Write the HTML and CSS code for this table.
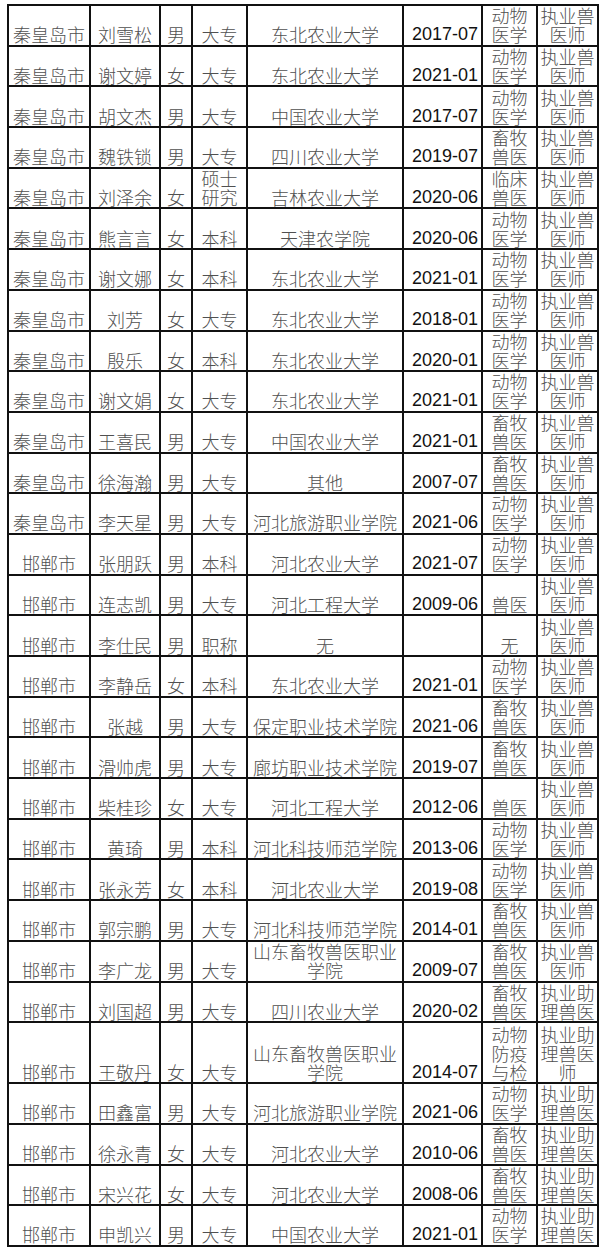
FILE: index.html
```html
<!DOCTYPE html>
<html lang="zh-CN">
<head>
<meta charset="utf-8">
<title>名单</title>
<link rel="stylesheet" href="styles.css">
</head>
<body>
<div class="t">
<div class="c">秦皇岛市</div><div class="c">刘雪松</div><div class="c">男</div><div class="c">大专</div><div class="c">东北农业大学</div><div class="c d">2017-07</div><div class="c">动物医学</div><div class="c">执业兽医师</div>
<div class="c">秦皇岛市</div><div class="c">谢文婷</div><div class="c">女</div><div class="c">大专</div><div class="c">东北农业大学</div><div class="c d">2021-01</div><div class="c">动物医学</div><div class="c">执业兽医师</div>
<div class="c">秦皇岛市</div><div class="c">胡文杰</div><div class="c">男</div><div class="c">大专</div><div class="c">中国农业大学</div><div class="c d">2017-07</div><div class="c">动物医学</div><div class="c">执业兽医师</div>
<div class="c">秦皇岛市</div><div class="c">魏铁锁</div><div class="c">男</div><div class="c">大专</div><div class="c">四川农业大学</div><div class="c d">2019-07</div><div class="c">畜牧兽医</div><div class="c">执业兽医师</div>
<div class="c">秦皇岛市</div><div class="c">刘泽余</div><div class="c">女</div><div class="c">硕士研究</div><div class="c">吉林农业大学</div><div class="c d">2020-06</div><div class="c">临床兽医</div><div class="c">执业兽医师</div>
<div class="c">秦皇岛市</div><div class="c">熊言言</div><div class="c">女</div><div class="c">本科</div><div class="c">天津农学院</div><div class="c d">2020-06</div><div class="c">动物医学</div><div class="c">执业兽医师</div>
<div class="c">秦皇岛市</div><div class="c">谢文娜</div><div class="c">女</div><div class="c">本科</div><div class="c">东北农业大学</div><div class="c d">2021-01</div><div class="c">动物医学</div><div class="c">执业兽医师</div>
<div class="c">秦皇岛市</div><div class="c">刘芳</div><div class="c">女</div><div class="c">大专</div><div class="c">东北农业大学</div><div class="c d">2018-01</div><div class="c">动物医学</div><div class="c">执业兽医师</div>
<div class="c">秦皇岛市</div><div class="c">殷乐</div><div class="c">女</div><div class="c">本科</div><div class="c">东北农业大学</div><div class="c d">2020-01</div><div class="c">动物医学</div><div class="c">执业兽医师</div>
<div class="c">秦皇岛市</div><div class="c">谢文娟</div><div class="c">女</div><div class="c">大专</div><div class="c">东北农业大学</div><div class="c d">2021-01</div><div class="c">动物医学</div><div class="c">执业兽医师</div>
<div class="c">秦皇岛市</div><div class="c">王喜民</div><div class="c">男</div><div class="c">大专</div><div class="c">中国农业大学</div><div class="c d">2021-01</div><div class="c">畜牧兽医</div><div class="c">执业兽医师</div>
<div class="c">秦皇岛市</div><div class="c">徐海瀚</div><div class="c">男</div><div class="c">大专</div><div class="c">其他</div><div class="c d">2007-07</div><div class="c">畜牧兽医</div><div class="c">执业兽医师</div>
<div class="c">秦皇岛市</div><div class="c">李天星</div><div class="c">男</div><div class="c">大专</div><div class="c">河北旅游职业学院</div><div class="c d">2021-06</div><div class="c">动物医学</div><div class="c">执业兽医师</div>
<div class="c">邯郸市</div><div class="c">张朋跃</div><div class="c">男</div><div class="c">本科</div><div class="c">河北农业大学</div><div class="c d">2021-07</div><div class="c">动物医学</div><div class="c">执业兽医师</div>
<div class="c">邯郸市</div><div class="c">连志凯</div><div class="c">男</div><div class="c">大专</div><div class="c">河北工程大学</div><div class="c d">2009-06</div><div class="c">兽医</div><div class="c">执业兽医师</div>
<div class="c">邯郸市</div><div class="c">李仕民</div><div class="c">男</div><div class="c">职称</div><div class="c">无</div><div class="c d"></div><div class="c">无</div><div class="c">执业兽医师</div>
<div class="c">邯郸市</div><div class="c">李静岳</div><div class="c">女</div><div class="c">本科</div><div class="c">东北农业大学</div><div class="c d">2021-01</div><div class="c">动物医学</div><div class="c">执业兽医师</div>
<div class="c">邯郸市</div><div class="c">张越</div><div class="c">男</div><div class="c">大专</div><div class="c">保定职业技术学院</div><div class="c d">2021-06</div><div class="c">畜牧兽医</div><div class="c">执业兽医师</div>
<div class="c">邯郸市</div><div class="c">滑帅虎</div><div class="c">男</div><div class="c">大专</div><div class="c">廊坊职业技术学院</div><div class="c d">2019-07</div><div class="c">畜牧兽医</div><div class="c">执业兽医师</div>
<div class="c">邯郸市</div><div class="c">柴桂珍</div><div class="c">女</div><div class="c">大专</div><div class="c">河北工程大学</div><div class="c d">2012-06</div><div class="c">兽医</div><div class="c">执业兽医师</div>
<div class="c">邯郸市</div><div class="c">黄琦</div><div class="c">男</div><div class="c">本科</div><div class="c">河北科技师范学院</div><div class="c d">2013-06</div><div class="c">动物医学</div><div class="c">执业兽医师</div>
<div class="c">邯郸市</div><div class="c">张永芳</div><div class="c">女</div><div class="c">本科</div><div class="c">河北农业大学</div><div class="c d">2019-08</div><div class="c">动物医学</div><div class="c">执业兽医师</div>
<div class="c">邯郸市</div><div class="c">郭宗鹏</div><div class="c">男</div><div class="c">大专</div><div class="c">河北科技师范学院</div><div class="c d">2014-01</div><div class="c">畜牧兽医</div><div class="c">执业兽医师</div>
<div class="c">邯郸市</div><div class="c">李广龙</div><div class="c">男</div><div class="c">大专</div><div class="c">山东畜牧兽医职业学院</div><div class="c d">2009-07</div><div class="c">畜牧兽医</div><div class="c">执业兽医师</div>
<div class="c">邯郸市</div><div class="c">刘国超</div><div class="c">男</div><div class="c">大专</div><div class="c">四川农业大学</div><div class="c d">2020-02</div><div class="c">畜牧兽医</div><div class="c">执业助理兽医</div>
<div class="c">邯郸市</div><div class="c">王敬丹</div><div class="c">女</div><div class="c">大专</div><div class="c">山东畜牧兽医职业学院</div><div class="c d">2014-07</div><div class="c">动物防疫与检</div><div class="c">执业助理兽医师</div>
<div class="c">邯郸市</div><div class="c">田鑫富</div><div class="c">男</div><div class="c">大专</div><div class="c">河北旅游职业学院</div><div class="c d">2021-06</div><div class="c">动物医学</div><div class="c">执业助理兽医</div>
<div class="c">邯郸市</div><div class="c">徐永青</div><div class="c">女</div><div class="c">大专</div><div class="c">河北农业大学</div><div class="c d">2010-06</div><div class="c">畜牧兽医</div><div class="c">执业助理兽医</div>
<div class="c">邯郸市</div><div class="c">宋兴花</div><div class="c">女</div><div class="c">大专</div><div class="c">河北农业大学</div><div class="c d">2008-06</div><div class="c">畜牧兽医</div><div class="c">执业助理兽医</div>
<div class="c">邯郸市</div><div class="c">申凯兴</div><div class="c">男</div><div class="c">大专</div><div class="c">中国农业大学</div><div class="c d">2021-01</div><div class="c">动物医学</div><div class="c">执业助理兽医</div>
</div>
</body>
</html>
```
FILE: styles.css
```css
html, body {
  margin: 0;
  background: #fff;
}
body {
  padding: 4px 0 0 7px;
}
.t {
  display: grid;
  grid-template-columns: 82px 70px 32px 55px 156px 79px 55px 61px;
  grid-template-rows: repeat(25, 40.7px) 61px repeat(4, 40.7px);
  width: max-content;
  border-left: 2px solid #111;
  border-top: 2px solid #111;
}
.c {
  display: flex;
  align-items: flex-end;
  justify-content: center;
  text-align: center;
  border-right: 2px solid #111;
  border-bottom: 2px solid #111;
  padding: 0 1px 0.5px;
  font-family: "Noto Sans CJK SC", sans-serif;
  font-weight: 300;
  font-size: 18px;
  line-height: 19px;
  color: #505050;
}
.d {
  justify-content: flex-end;
  text-align: right;
  padding-right: 3px;
  font-family: "Liberation Sans", Arial, sans-serif;
  font-weight: 400;
  color: #111;
}
```
